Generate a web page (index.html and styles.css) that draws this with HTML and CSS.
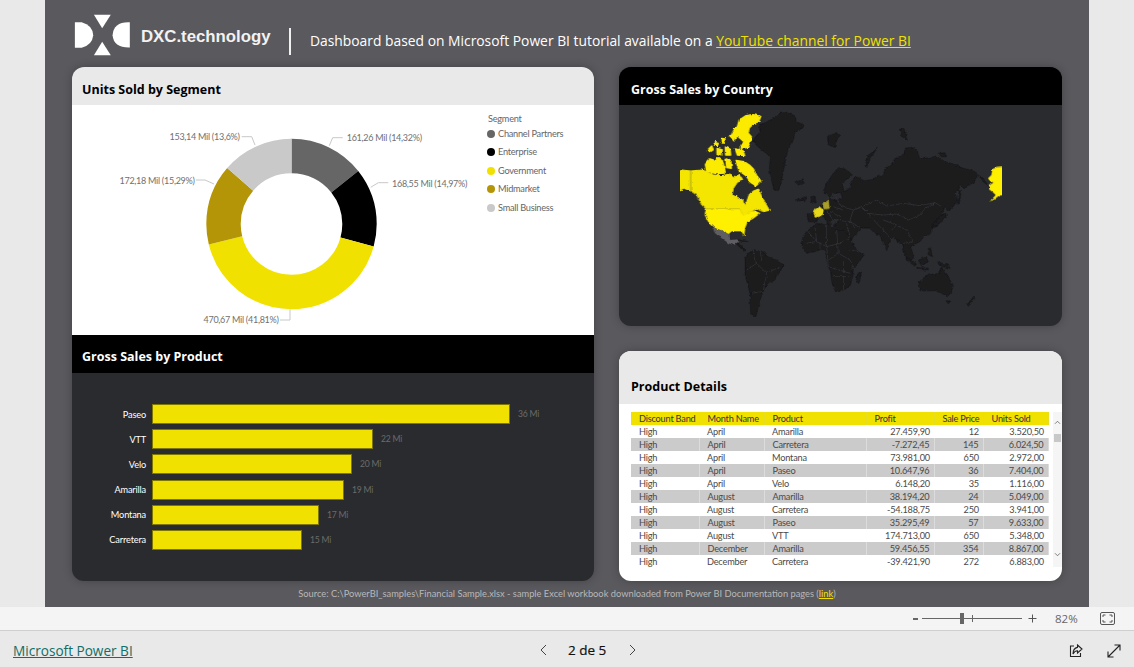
FILE: index.html
```html
<!DOCTYPE html>
<html lang="en">
<head>
<meta charset="utf-8">
<title>Power BI report</title>
<link rel="stylesheet" href="styles.css">
</head>
<body>
<main class="stage">
  <div class="canvas">
    <header class="banner">
      <svg class="logo" viewBox="95 45 155 117" aria-hidden="true">
        <path d="M97 68H116Q146 76 148 104Q146 130 116 139H97Z"/>
        <path d="M150 47H197L173 85Z"/>
        <path d="M150 160H197L173 122Z"/>
        <path d="M250 68Q205 66 202 104Q205 139 250 138Z"/>
      </svg>
      <span class="brand">DXC.technology</span>
      <span class="rule"></span>
      <p class="intro">Dashboard based on Microsoft Power BI tutorial available on a <a href="#">YouTube channel for Power BI</a></p>
    </header>

    <div class="board">
      <section class="card card-left">
        <h2 class="title title-light">Units Sold by Segment</h2>
        <div class="donut-body">
          <svg class="donut" viewBox="72 105 416 230" role="img">
            <g class="ring" transform="rotate(-90 291.5 224)">
              <circle cx="291.5" cy="224" r="68" pathLength="100" stroke="#666666" stroke-dasharray="14.32 100"/>
              <circle cx="291.5" cy="224" r="68" pathLength="100" stroke="#000000" stroke-dasharray="14.97 100" stroke-dashoffset="-14.32"/>
              <circle cx="291.5" cy="224" r="68" pathLength="100" stroke="#f0e100" stroke-dasharray="41.81 100" stroke-dashoffset="-29.29"/>
              <circle cx="291.5" cy="224" r="68" pathLength="100" stroke="#b59508" stroke-dasharray="15.29 100" stroke-dashoffset="-71.1"/>
              <circle cx="291.5" cy="224" r="68" pathLength="100" stroke="#c9c9c9" stroke-dasharray="13.61 100" stroke-dashoffset="-86.39"/>
            </g>
            <g class="leaders">
              <path d="M329.3 145.7L332.7 137.7H342.7"/>
              <path d="M370.7 187.3L378.3 182.7H388.3"/>
              <path d="M255 145L251.7 136.7H241.7"/>
              <path d="M214 184L205 180H196"/>
              <path d="M290 309.3V320H280"/>
            </g>
            <g class="labels">
              <text x="346.7" y="141">161,26 Mil (14,32%)</text>
              <text x="392" y="187">168,55 Mil (14,97%)</text>
              <text x="169.5" y="140">153,14 Mil (13,6%)</text>
              <text x="119.5" y="184">172,18 Mil (15,29%)</text>
              <text x="203.5" y="323">470,67 Mil (41,81%)</text>
            </g>
          </svg>
          <div class="legend">
            <div class="legend-title">Segment</div>
            <div class="legend-item"><i class="dot dot-channel"></i>Channel Partners</div>
            <div class="legend-item"><i class="dot dot-enterprise"></i>Enterprise</div>
            <div class="legend-item"><i class="dot dot-government"></i>Government</div>
            <div class="legend-item"><i class="dot dot-midmarket"></i>Midmarket</div>
            <div class="legend-item"><i class="dot dot-small"></i>Small Business</div>
          </div>
        </div>
        <h2 class="title title-dark">Gross Sales by Product</h2>
        <div class="bars">
          <div class="bar-row"><span class="bar-name">Paseo</span><span class="bar" style="width:358px"></span><span class="bar-val">36 Mi</span></div>
          <div class="bar-row"><span class="bar-name">VTT</span><span class="bar" style="width:221px"></span><span class="bar-val">22 Mi</span></div>
          <div class="bar-row"><span class="bar-name">Velo</span><span class="bar" style="width:200px"></span><span class="bar-val">20 Mi</span></div>
          <div class="bar-row"><span class="bar-name">Amarilla</span><span class="bar" style="width:192px"></span><span class="bar-val">19 Mi</span></div>
          <div class="bar-row"><span class="bar-name">Montana</span><span class="bar" style="width:167px"></span><span class="bar-val">17 Mi</span></div>
          <div class="bar-row"><span class="bar-name">Carretera</span><span class="bar" style="width:150px"></span><span class="bar-val">15 Mi</span></div>
        </div>
      </section>

      <div class="right-col">
        <section class="card card-map">
          <h2 class="title title-dark">Gross Sales by Country</h2>
          <svg class="map" viewBox="-3 135 1329 663" role="img">
            <defs>
              <clipPath id="map-frame"><rect x="180" y="135" width="964" height="663"/></clipPath>
              <filter id="coast" x="-5%" y="-5%" width="110%" height="110%">
                <feTurbulence type="fractalNoise" baseFrequency="0.09" numOctaves="2" seed="4"/>
                <feDisplacementMap in="SourceGraphic" scale="9" xChannelSelector="R" yChannelSelector="G"/>
              </filter>
            </defs>
            <g class="world" filter="url(#coast)">
              <g class="land">
                <path d="M468 172L480 160L500 157L525 168L530 185L552 195L540 210L525 215L520 240L505 262L498 295L492 325L482 375L475 392L462 390L452 350L448 325L452 290L425 270L398 245L405 232L420 215L418 195L440 185Z"/>
                <path d="M525 365L550 360L552 370L535 375Z"/>
                <path d="M622 230L650 218L660 228L648 240L645 262L625 255Z"/>
                <path d="M735 320L745 285L772 265L750 295L742 322Z"/>
                <path d="M838 208L852 205L862 240L848 232Z"/>
                <path d="M955 280L975 278L980 290L960 290Z"/>
                <path d="M566 485L560 462L585 458L580 452L600 438L612 425L630 418L650 420L668 415L662 398L645 400L628 412L622 400L610 395L620 370L640 340L655 323L680 328L697 345L688 352L676 360L668 372L672 395L690 385L695 360L710 350L735 362L760 358L775 345L790 350L795 325L815 315L825 295L850 285L855 265L875 262L892 270L897 293L930 295L945 288L975 305L1000 312L1030 325L1062 332L1073 345L1062 368L1045 375L1030 385L1020 372L1012 395L1005 400L1012 420L1000 440L985 452L975 440L968 455L972 470L958 480L952 500L935 505L930 522L910 530L900 545L880 555L872 560L882 590L875 600L862 600L850 570L848 550L832 545L822 528L812 540L800 572L790 550L780 525L765 520L750 505L725 505L712 520L700 530L680 560L665 540L650 520L640 495L662 482L640 478L630 485L632 498L622 495L612 470L600 465L590 485Z"/>
                <path d="M1010 432L1018 392L1024 392L1018 430Z"/>
                <path d="M972 460L980 465L960 490L935 500L940 490Z"/>
                <path d="M575 410L585 408L588 428L572 430Z"/>
                <path d="M1075 345L1090 355L1105 378L1090 365Z"/>
                <path d="M545 545L552 525L565 510L590 490L620 495L650 510L672 512L690 530L702 560L715 575L732 585L715 610L700 625L698 650L690 680L665 692L645 692L635 665L632 635L625 620L615 570L600 568L585 575L560 580L548 565Z"/>
                <path d="M712 640L725 635L718 668L708 665Z"/>
                <path d="M375 595L385 580L400 570L430 575L445 590L470 600L492 615L480 635L465 660L445 672L430 690L420 720L408 770L392 762L390 700L375 645Z"/>
                <path d="M345 548L358 548L378 572L370 572Z"/>
                <path d="M355 540L385 545L360 543Z"/>
                <path d="M897 665L915 650L930 640L945 645L955 640L965 620L975 640L985 650L1000 680L990 702L982 710L965 700L945 692L900 692Z"/>
                <path d="M978 722L990 722L985 732Z"/>
                <path d="M1040 735L1062 708L1064 715L1046 738Z"/>
                <path d="M858 590L890 612L885 618L858 600Z"/>
                <path d="M895 600L920 590L925 605L905 618Z"/>
                <path d="M950 605L985 615L990 625L960 618Z"/>
                <path d="M925 565L932 565L938 590L925 585Z"/>
                <path d="M890 622L925 625L925 630L892 628Z"/>
                <path d="M525 420L560 410L555 425Z"/>
              </g>
              <g class="borders">
                <path d="M725 440L745 432L770 420L800 438L850 430L900 437L945 428L965 440M745 460L790 465L830 462L865 480L900 465L915 445L945 428"/>
                <path d="M745 460L725 440L700 450M745 460L770 490L790 510L815 540M790 480L830 495L860 510M860 510L880 545M830 495L815 510M880 545L850 550"/>
                <path d="M700 450L690 480L705 505M665 482L700 490L720 505M640 400L665 440L700 450M625 412L620 450L640 478L665 482M640 440L668 450M630 455L660 470M680 490L690 530"/>
                <path d="M585 500L590 545L620 560L660 550L690 530M620 495L620 560M650 510L655 580L690 600L700 625M585 545L560 550M620 560L625 620L690 640M655 580L625 600M640 650L690 650M670 600L670 690M560 510L590 545M600 568L600 545M690 570L715 575"/>
                <path d="M400 570L410 610L440 640L430 690M410 610L380 630M440 640L480 620M420 570L425 600M395 700L425 695"/>
              </g>
            </g>
            <g clip-path="url(#map-frame)">
              <g class="sales" filter="url(#coast)">
                <g class="na" transform="translate(120 135)">
                  <path class="canada" d="M40 192L92 198L125 195L140 200L160 210L185 212L210 207L225 215L240 208L248 225L232 232L220 250L216 270L235 278L248 285L256 302L262 285L268 268L280 258L296 252L303 270L318 298L328 316L310 320L290 312L272 320L250 335L240 312L138 312L125 300L110 270L92 258L72 250L40 262Z"/>
                  <path class="isle" d="M222 75L232 65L238 45L258 32L280 29L302 34L296 50L282 55L268 68L264 84L274 95L270 112L262 128L240 130L252 110L240 100L232 92L222 108L212 95Z"/>
                  <path class="isle" d="M228 166L252 170L268 180L280 192L290 212L302 228L288 242L272 232L258 212L238 198L232 182Z"/>
                  <path class="isle" d="M136 178L150 162L168 168L172 158L188 168L196 204L168 206L140 198Z"/>
                  <path class="isle" d="M198 162L212 166L214 190L200 188Z"/>
                  <path class="isle" d="M196 126L210 132L212 150L197 150Z"/>
                  <path class="isle" d="M226 132L248 136L254 152L232 150Z"/>
                  <path class="isle" d="M143 135L155 123L160 134L151 140Z"/>
                  <path class="isle" d="M166 110L175 112L172 122L166 120Z"/>
                  <path class="isle" d="M186 100L195 102L193 115L187 112Z"/>
                  <path class="isle" d="M171 130L187 135L184 150L171 145Z"/>
                  <path class="canada-line" d="M92 198V258L110 270L125 300L138 312H240L250 335L272 320L290 312L310 320"/>
                  <path class="usa" d="M138 313H240L250 333L272 320L285 318L300 325L280 340L262 350L255 368L252 392L245 378L215 378L205 387L190 378L165 368L145 350L135 330Z"/>
                  <path class="mexico" d="M157 368L190 378L205 387L212 405L230 403L238 408L222 420L205 415L185 400L165 385Z"/>
                </g>
                <path class="france" d="M580 452L598 440L610 450L606 468L585 472Z"/>
                <path class="germany" d="M608 430L625 422L628 445L612 447Z"/>
                <path class="usa" d="M1105 355L1115 345L1118 328L1130 322L1170 320V405H1138L1125 415L1112 422L1128 405L1118 395L1108 388L1110 375L1122 368L1110 362Z"/>
              </g>
            </g>
          </svg>
        </section>

        <section class="card card-table">
          <h2 class="title title-table">Product Details</h2>
          <div class="table-wrap">
            <table class="details">
              <colgroup>
                <col class="c1"><col class="c2"><col class="c3"><col class="c4"><col class="c5"><col class="c6">
              </colgroup>
              <thead>
                <tr><th>Discount Band</th><th>Month Name</th><th>Product</th><th>Profit</th><th>Sale Price</th><th>Units Sold</th></tr>
              </thead>
              <tbody>
                <tr><td>High</td><td>April</td><td>Amarilla</td><td class="num">27.459,90</td><td class="num">12</td><td class="num">3.520,50</td></tr>
                <tr><td>High</td><td>April</td><td>Carretera</td><td class="num">-7.272,45</td><td class="num">145</td><td class="num">6.024,50</td></tr>
                <tr><td>High</td><td>April</td><td>Montana</td><td class="num">73.981,00</td><td class="num">650</td><td class="num">2.972,00</td></tr>
                <tr><td>High</td><td>April</td><td>Paseo</td><td class="num">10.647,96</td><td class="num">36</td><td class="num">7.404,00</td></tr>
                <tr><td>High</td><td>April</td><td>Velo</td><td class="num">6.148,20</td><td class="num">35</td><td class="num">1.116,00</td></tr>
                <tr><td>High</td><td>August</td><td>Amarilla</td><td class="num">38.194,20</td><td class="num">24</td><td class="num">5.049,00</td></tr>
                <tr><td>High</td><td>August</td><td>Carretera</td><td class="num">-54.188,75</td><td class="num">250</td><td class="num">3.941,00</td></tr>
                <tr><td>High</td><td>August</td><td>Paseo</td><td class="num">35.295,49</td><td class="num">57</td><td class="num">9.633,00</td></tr>
                <tr><td>High</td><td>August</td><td>VTT</td><td class="num">174.713,00</td><td class="num">650</td><td class="num">5.348,00</td></tr>
                <tr><td>High</td><td>December</td><td>Amarilla</td><td class="num">59.456,55</td><td class="num">354</td><td class="num">8.867,00</td></tr>
                <tr><td>High</td><td>December</td><td>Carretera</td><td class="num">-39.421,90</td><td class="num">272</td><td class="num">6.883,00</td></tr>
              </tbody>
            </table>
            <div class="scroll">
              <svg class="scroll-arrow" viewBox="0 0 8 6"><path d="M1 4.5L4 1.5L7 4.5"/></svg>
              <span class="scroll-thumb"></span>
              <svg class="scroll-arrow scroll-down" viewBox="0 0 8 6"><path d="M1 1.5L4 4.5L7 1.5"/></svg>
            </div>
          </div>
        </section>
      </div>
    </div>

    <p class="source">Source: C:\PowerBI_samples\Financial Sample.xlsx - sample Excel workbook downloaded from Power BI Documentation pages (<a href="#">link</a>)</p>
  </div>
</main>

<div class="zoombar">
  <span class="zoom-minus"></span>
  <span class="slider"><span class="slider-tick"></span><span class="slider-thumb"></span></span>
  <svg class="zoom-plus" viewBox="0 0 9 9"><path d="M4.5 0.5V8.5M0.5 4.5H8.5"/></svg>
  <span class="zoom-value">82%</span>
  <svg class="fit" viewBox="0 0 15 13"><rect x="0.5" y="0.5" width="14" height="12" rx="1.5"/><path d="M3 5V3H5.5M12 5V3H9.5M3 8V10H5.5M12 8V10H9.5"/></svg>
</div>

<footer class="footer">
  <a class="pbi-link" href="#">Microsoft Power BI</a>
  <nav class="pager">
    <svg class="chev" viewBox="0 0 8 12"><path d="M6.5 1L1.5 6L6.5 11"/></svg>
    <span class="page-num">2 de 5</span>
    <svg class="chev" viewBox="0 0 8 12"><path d="M1.5 1L6.5 6L1.5 11"/></svg>
  </nav>
  <div class="tools">
    <svg class="tool" viewBox="0 0 14 14"><path d="M5 2H1.5V12.5H11.5V9"/><path d="M8.5 1L13 5L8.5 9V6.8C6.5 6.8 5 7.8 4 10C4 6.5 5.8 4 8.5 3.4Z"/></svg>
    <svg class="tool" viewBox="0 0 14 14"><path d="M1 13L13 1M7.5 1H13V6.5M1 7.5V13H6.5"/></svg>
  </div>
</footer>
</body>
</html>
```
FILE: styles.css
```css
* { box-sizing: border-box; }
html, body { margin: 0; height: 100%; }
body {
  width: 1134px;
  height: 667px;
  overflow: hidden;
  background: #e9e9e9;
  font-family: "Open Sans", "Noto Sans", sans-serif;
  display: flex;
  flex-direction: column;
}
.stage { height: 607px; padding-left: 45px; padding-right: 45px; }
.canvas {
  width: 1044px;
  height: 607px;
  background: #5a595e;
  padding-left: 27px;
  overflow: hidden;
}
.banner { height: 67px; display: flex; align-items: flex-start; }
.logo { width: 56px; height: 42px; margin: 14px 0 0 2px; fill: #fff; flex: none; }
.brand { font: 700 16.8px/20px "Liberation Sans", sans-serif; color: #f2f2f2; margin: 27px 0 0 11px; width: 148px; white-space: nowrap; }
.rule { width: 1.5px; height: 27px; background: #f0f0f0; margin-top: 28px; }
.intro { margin: 31px 0 0 19.5px; font-size: 13.85px; line-height: 20px; color: #fff; white-space: nowrap; }
.intro a { color: #f0e100; }
.board { display: flex; gap: 25px; }
.card { overflow: hidden; border-radius: 12px; box-shadow: 0 0 8px rgba(0,0,0,.25); }
.card-left { width: 522px; height: 514px; display: flex; flex-direction: column; background: #2a2b2f; }
.right-col { width: 443px; display: flex; flex-direction: column; gap: 25px; }
.title { margin: 0; height: 38px; padding: 13px 10px 0; font-size: 12.5px; line-height: 20px; font-weight: 700; }
.title-light { background: #e9e9e9; color: #000; }
.title-dark { background: #000; color: #fff; padding-left: 10px; }
.donut-body + .title { padding-top: 12px; }
.donut-body { height: 230px; background: #fff; display: flex; }
.donut { width: 416px; height: 230px; display: block; flex: none; }
.ring circle { fill: none; stroke-width: 34.4; }
.leaders path { fill: none; stroke: #c8c8c8; stroke-width: 1; }
.labels text { font: 9px "Lato", sans-serif; letter-spacing: -0.27px; fill: #707070; }
.legend { margin-left: -1px; padding-top: 8px; font: 9.2px/18.5px "Lato", sans-serif; letter-spacing: -0.25px; color: #666; }
.legend-title { height: 11.5px; line-height: 12px; margin-left: 1px; }
.legend-item { display: flex; align-items: center; gap: 3px; white-space: nowrap; }
.dot { width: 8px; height: 8px; border-radius: 50%; flex: none; }
.dot-channel { background: #666; }
.dot-enterprise { background: #000; }
.dot-government { background: #f0e100; }
.dot-midmarket { background: #b59508; }
.dot-small { background: #c9c9c9; }
.bars { flex: 1; display: flex; flex-direction: column; gap: 5.2px; padding-top: 31px; }
.bar-row { height: 20px; display: flex; align-items: center; font: 9.2px "Lato", sans-serif; letter-spacing: -0.15px; }
.bar-name { width: 74px; text-align: right; color: #fff; margin-right: 6px; }
.bar { height: 20px; background: #f0e100; border: 1px solid #7f7600; }
.bar-val { margin-left: 8px; color: #6b6b6b; font-size: 8.6px; letter-spacing: -0.2px; }
.card-map { height: 259px; background: #2a2b2f; }
.card-map .title { padding-left: 12px; }
.map { width: 443px; height: 221px; display: block; }
.land path { fill: #1a1a1c; stroke: #1a1a1c; stroke-width: 2; stroke-linejoin: round; }
.borders path { fill: none; stroke: #343438; stroke-width: 2.4; stroke-linejoin: round; }
.canada { fill: #f4e600; stroke: #f4e600; stroke-width: 3; stroke-linejoin: round; }
.isle { fill: #fbeb00; stroke: #fbeb00; stroke-width: 4; stroke-linejoin: round; }
.canada-line { fill: none; stroke: #8a8420; stroke-width: 2; }
.usa { fill: #fff000; stroke: #fff000; stroke-width: 2; stroke-linejoin: round; }
.mexico { fill: #5e5e63; }
.france { fill: #e6d81a; stroke: #e6d81a; stroke-width: 2; stroke-linejoin: round; }
.germany { fill: #a99e2c; stroke: #a99e2c; stroke-width: 2; stroke-linejoin: round; }
.card-table { height: 230px; background: #fff; }
.title-table { background: #e9e9e9; color: #000; height: 53px; padding: 26px 12px 0; }
.table-wrap { display: flex; padding: 8px 0 0 12px; }
.details { width: 417px; table-layout: fixed; border-collapse: collapse; font: 9.2px/13px "Lato", sans-serif; letter-spacing: -0.2px; color: #4a4a4a; }
.c1 { width: 68px; } .c2 { width: 65px; } .c3 { width: 102px; } .c4 { width: 68px; } .c5 { width: 49px; } .c6 { width: 65px; }
.details th { height: 13px; padding: 0 0 0 8px; background: #f0e100; font-weight: 400; text-align: left; color: #333; white-space: nowrap; overflow: hidden; border-right: 1px solid #e9dd20; }
.details td { height: 13px; padding: 0 0 0 8px; white-space: nowrap; overflow: hidden; }
.details tbody tr:nth-child(even) td { background: #cbcbcb; border-right: 1px solid #dcdcdc; }
.details td.num { text-align: right; padding: 0 4px 0 0; }
.scroll { width: 9px; height: 155px; margin-left: 4px; background: #f5f5f5; display: flex; flex-direction: column; align-items: center; padding-top: 8px; }
.scroll-arrow { width: 7px; height: 5px; fill: none; stroke: #666; stroke-width: 1; flex: none; }
.scroll-thumb { width: 7px; height: 8px; background: #c8c8c8; margin-top: 9px; }
.scroll-down { margin-top: auto; margin-bottom: 10px; }
.source { margin: 6px 0 0 -27px; width: 1044px; text-align: center; font: 9.3px/13px "Lato", sans-serif; color: #b8b8b8; }
.source a { color: #f0e100; }
.zoombar {
  height: 24px;
  background: #f4f4f4;
  border-bottom: 1px solid #cfcfcf;
  display: flex;
  align-items: center;
  padding-left: 913px;
  color: #666;
}
.zoom-minus { width: 5px; height: 2px; background: #666; }
.slider { position: relative; width: 100px; height: 1px; background: #666; margin-left: 4px; }
.slider-tick { position: absolute; left: 50px; top: -3px; width: 1px; height: 7px; background: #666; }
.slider-thumb { position: absolute; left: 38px; top: -5px; width: 4px; height: 11px; background: #666; }
.zoom-plus { width: 9px; height: 9px; margin-left: 6px; fill: none; stroke: #555; stroke-width: 1; }
.zoom-value { width: 24px; margin-left: 18px; font-size: 11.5px; color: #666; }
.fit { width: 15px; height: 13px; margin-left: 21px; fill: none; stroke: #555; stroke-width: 1; }
.footer { flex: 1; position: relative; display: flex; align-items: center; justify-content: space-between; padding: 3px 13px 0; }
.pbi-link { font-size: 13.6px; color: #116e66; }
.pager { position: absolute; left: 539px; top: 11px; display: flex; align-items: center; gap: 20px; }
.chev { width: 9px; height: 12px; fill: none; stroke: #444; stroke-width: 1; }
.page-num { font-size: 13.5px; line-height: 16px; font-weight: 400; color: #111; width: 40px; white-space: nowrap; -webkit-text-stroke: 0.2px #111; }
.tools { display: flex; gap: 24px; }
.tool { width: 14px; height: 14px; fill: none; stroke: #222; stroke-width: 1.1; }
```
